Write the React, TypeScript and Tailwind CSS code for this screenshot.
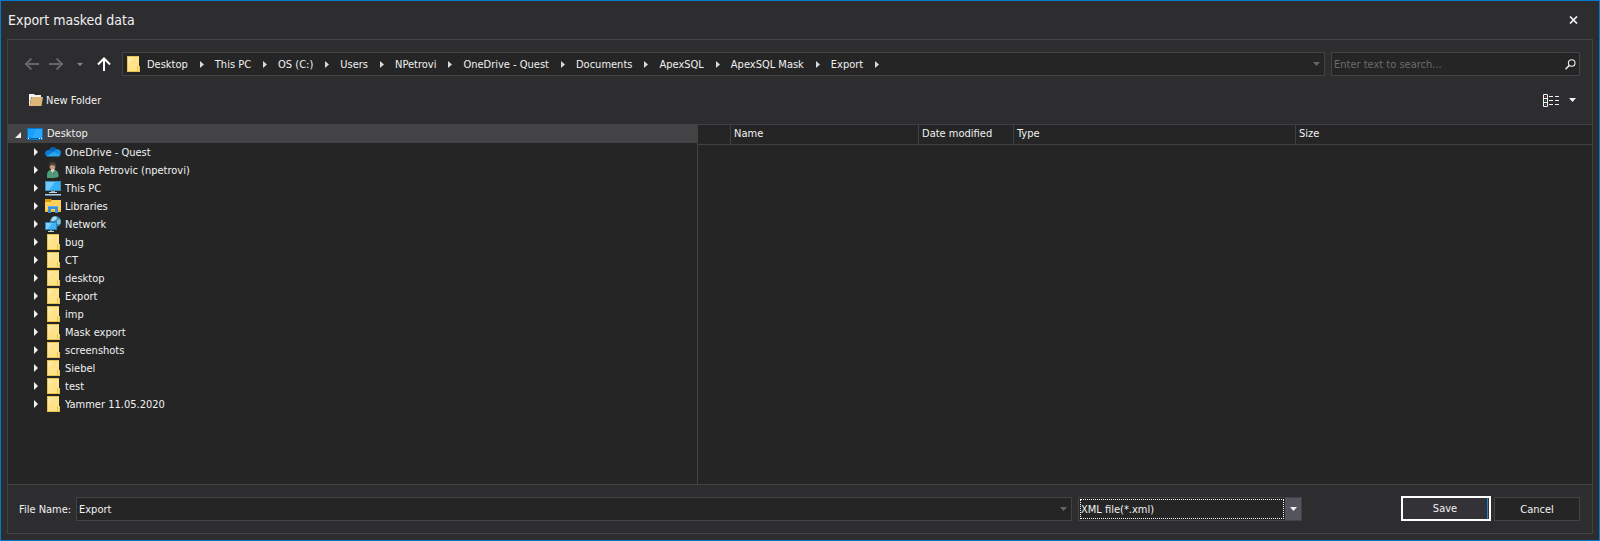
import type { ReactNode } from "react";

function FolderIcon() {
  return (
    <svg width="16" height="16" viewBox="0 0 16 16" aria-hidden="true" className="shrink-0">
      <rect x="2" y="0" width="12" height="16" fill="#e8c34f" />
      <rect x="3" y="1" width="11" height="14" fill="#ffe38b" />
      <path d="M3 1h6L3 9z" fill="#ffeaa4" />
      <path d="M12 10h3v6h-3z" fill="#e8c34f" />
      <path d="M13 10h1v5h-1z" fill="#ffe08a" />
    </svg>
  );
}

function NewFolderIcon() {
  return (
    <svg width="14" height="12" viewBox="0 0 14 12" aria-hidden="true" className="shrink-0">
      <path d="M0 0h5l1 1h6v2H2L0 12z" fill="#f5f3f0" />
      <path d="M2.5 3H14l-1.5 9H0.5z" fill="#dcb67a" />
      <path d="M0 3h2L0.5 12H0z" fill="#f5f3f0" />
    </svg>
  );
}

function DesktopIcon() {
  return (
    <svg width="16" height="12" viewBox="0 0 16 12" aria-hidden="true" className="shrink-0">
      <rect width="16" height="12" fill="#0a78c8" />
      <rect x="1" y="1" width="14" height="9" fill="#18a0fb" />
      <path d="M9 1h6v9H5z" fill="#35adff" opacity="0.7" />
      <rect x="1" y="10" width="14" height="1" fill="#0b5f9f" />
      <path d="M1 10h1v1H1zM12 10h1v1h-1zM14 10h1v1h-1z" fill="#ffffff" />
    </svg>
  );
}

function OneDriveIcon() {
  return (
    <svg width="16" height="16" viewBox="0 0 16 16" aria-hidden="true" className="shrink-0">
      <path d="M4 7.2A4.3 4.3 0 0 1 12 5.400L9.5 9 4 8z" fill="#0364b8" />
      <path d="M0 9.600A3.500 3.500 0 0 1 3.600 6c1.300 0 2 .3 2.800.8l4.600 2.800L2 12.300A3 3 0 0 1 0 9.600z" fill="#0f78d4" />
      <path d="M8.500 8c1-1.800 2.200-2.700 3.700-2.700A3.800 3.800 0 0 1 16 9.200l-1.500 2.300z" fill="#1490df" />
      <path d="M1.400 12 8.800 7.800 15.500 11c-.6.900-1.300 1.500-2.300 1.500H3.500c-.900 0-1.600-.1-2.100-.5z" fill="#28a8ea" />
    </svg>
  );
}

function UserIcon() {
  return (
    <svg width="16" height="16" viewBox="0 0 16 16" aria-hidden="true" className="shrink-0">
      <path d="M2 16V13c0-3 1.500-5 4-5h3c3 0 4.500 2 4.500 5v2c-2 1-9 1-11.500 1z" fill="#4f9a78" />
      <path d="M6 7h3.500v2L8.500 12 6 9z" fill="#e7d5c4" />
      <circle cx="7.500" cy="4.500" r="3" fill="#c99b7a" />
      <path d="M4 4.500C3.500 1.500 5 0 7.500 0s4 1.500 3.300 4.700L10 6 9.500 3.500 6 3 5 5z" fill="#4a413c" />
      <path d="M8.500 9 8 13l2-3z" fill="#2f6f54" />
    </svg>
  );
}

function ComputerIcon() {
  return (
    <svg width="16" height="16" viewBox="0 0 16 16" aria-hidden="true" className="shrink-0">
      <rect x="0" y="1" width="16" height="10" fill="#3f8fb8" />
      <rect x="1" y="2" width="14" height="8" fill="#36b0f8" />
      <path d="M1 2h9L4 10H1z" fill="#6fcbff" />
      <rect x="6" y="11" width="4" height="1" fill="#8ba3b3" />
      <rect x="4" y="12" width="8" height="1" fill="#c8d3da" />
      <rect x="0" y="14" width="16" height="1" fill="#b8cbd8" />
      <rect x="0" y="15" width="16" height="1" fill="#54809e" />
    </svg>
  );
}

function LibrariesIcon() {
  return (
    <svg width="16" height="16" viewBox="0 0 16 16" aria-hidden="true" className="shrink-0">
      <path d="M0 1h6l2 2h-2L5 4H0z" fill="#e09b00" />
      <path d="M0 4h5l2-2h9v12H0z" fill="#ffd158" />
      <path d="M0 12h16v2H0z" fill="#f3bd3c" />
      <path d="M3 8h10v7h-3v-4H6v4H3z" fill="#3a92dc" />
      <path d="M3 8h10v1H3z" fill="#5fb2f0" />
    </svg>
  );
}

function NetworkIcon() {
  return (
    <svg width="16" height="16" viewBox="0 0 16 16" aria-hidden="true" className="shrink-0">
      <circle cx="10.500" cy="5.500" r="5.500" fill="#3c86ad" />
      <path d="M7 2c1-1.300 3-1.700 4.500-1.200L12 3 9 5H6z" fill="#a9dcf0" />
      <path d="M12 4l3-1c.8 1.500.8 4 0 5.500L12 8z" fill="#7fc0dc" />
      <rect x="0" y="6" width="12" height="8" fill="#2f86bd" />
      <rect x="1" y="7" width="10" height="6" fill="#3fb4fa" />
      <path d="M1 7h6l-4 6H1z" fill="#78cfff" />
      <rect x="5" y="14" width="2" height="1" fill="#8ba3b3" />
      <rect x="3" y="15" width="6" height="1" fill="#c2ccd3" />
    </svg>
  );
}

function Chevron({ className = "text-[#f1f1f1]" }: { className?: string }) {
  return (
    <svg width="7" height="4" viewBox="0 0 7 4" aria-hidden="true" className={`shrink-0 ${className}`}>
      <path d="M0 0h7L3.500 4z" fill="currentColor" />
    </svg>
  );
}

function Arrow({ className }: { className: string }) {
  return (
    <svg width="14" height="12" viewBox="0 0 14 12" aria-hidden="true" className={`shrink-0 ${className}`}>
      <path d="M1 6h13M6.500.500 1 6l5.500 5.500" fill="none" stroke="currentColor" strokeWidth="2" />
    </svg>
  );
}

const crumbs = [
  "Desktop", "This PC", "OS (C:)", "Users", "NPetrovi", "OneDrive - Quest",
  "Documents", "ApexSQL", "ApexSQL Mask", "Export",
];

const nodes: { label: string; icon: ReactNode }[] = [
  { label: "OneDrive - Quest", icon: <OneDriveIcon /> },
  { label: "Nikola Petrovic (npetrovi)", icon: <UserIcon /> },
  { label: "This PC", icon: <ComputerIcon /> },
  { label: "Libraries", icon: <LibrariesIcon /> },
  { label: "Network", icon: <NetworkIcon /> },
  ...["bug", "CT", "desktop", "Export", "imp", "Mask export", "screenshots", "Siebel", "test", "Yammer 11.05.2020"].map(
    (label) => ({ label, icon: <FolderIcon /> }),
  ),
];

function TitleBar() {
  return (
    <header className="flex h-[38px] items-center justify-between pl-[7px] pr-5">
      <h1 className="text-sm">Export masked data</h1>
      <button type="button" aria-label="Close" className="flex h-6 w-[11px] items-center justify-center">
        <svg width="9" height="8" viewBox="0 0 9 8" aria-hidden="true">
          <path d="M1 0.500 8 7.500M8 0.500 1 7.500" stroke="#f1f1f1" strokeWidth="1.700" />
        </svg>
      </button>
    </header>
  );
}

function NavigationRow() {
  return (
    <div className="flex items-center gap-1.5 px-3 pt-3">
      <nav aria-label="History" className="flex w-24 shrink-0 items-center pl-[5px]">
        <button type="button" aria-label="Back"><Arrow className="text-[#66666a]" /></button>
        <button type="button" aria-label="Forward" className="ml-2.5"><Arrow className="rotate-180 text-[#66666a]" /></button>
        <button type="button" aria-label="Recent locations" className="ml-3.5">
          <svg width="6" height="3" viewBox="0 0 6 3" aria-hidden="true"><path d="M0 0h6L3 3z" fill="#8a8a8d" /></svg>
        </button>
        <button type="button" aria-label="Up one level" className="ml-3.5">
          <svg width="14" height="14" viewBox="0 0 14 14" aria-hidden="true">
            <path d="M7 14V1.500M1 7.500l6-6 6 6" fill="none" stroke="#ffffff" strokeWidth="2" />
          </svg>
        </button>
      </nav>
      <div className="flex h-6 min-w-0 flex-1 items-center border border-[#434346] bg-[#252526] pl-0.5 pr-1">
        <FolderIcon />
        <ol className="flex min-w-0 flex-1 items-center overflow-hidden pl-1.5">
          {crumbs.map((crumb) => (
            <li key={crumb} className="flex items-center whitespace-nowrap">
              <a href="#">{crumb}</a>
              <svg width="4" height="7" viewBox="0 0 4 7" aria-hidden="true" className="ml-3 mr-[11px] shrink-0">
                <path d="M0 0 4 3.500 0 7z" fill="#d8d8d8" />
              </svg>
            </li>
          ))}
        </ol>
        <button type="button" aria-label="Previous locations"><Chevron className="text-[#66666a]" /></button>
      </div>
      <div className="flex h-6 w-[249px] shrink-0 items-center border border-[#434346] bg-[#252526] pl-0.5 pr-[3px]">
        <input
          type="search"
          aria-label="Search"
          placeholder="Enter text to search..."
          className="min-w-0 flex-1 bg-transparent outline-none placeholder:text-[#6b6b6e]"
        />
        <button type="button" aria-label="Search">
          <svg width="11" height="11" viewBox="0 0 11 11" aria-hidden="true">
            <circle cx="6.700" cy="4" r="3.300" fill="none" stroke="#f1f1f1" strokeWidth="1.100" />
            <path d="M4.200 6.500.500 10.300" stroke="#f1f1f1" strokeWidth="1.500" />
          </svg>
        </button>
      </div>
    </div>
  );
}

function Toolbar() {
  return (
    <div className="flex h-12 items-center justify-between pl-[21px] pr-4">
      <button type="button" className="flex items-center gap-[3px]">
        <NewFolderIcon />
        New Folder
      </button>
      <button type="button" aria-label="Change view" className="flex items-center gap-2.5">
        <svg width="16" height="13" viewBox="0 0 16 13" aria-hidden="true">
          <path d="M.5.5h4v12h-4zM.5 4.500h4M.5 8.500h4M6 2.500h4M12 2.500h4M6 6.500h4M12 6.500h4M6 10.500h4M12 10.500h4" fill="none" stroke="#f1f1f1" />
          <path d="M2 2h1v1H2z" fill="#e0506a" />
          <path d="M2 6h1v1H2z" fill="#3fae63" />
          <path d="M2 10h1v1H2z" fill="#3c8fd8" />
        </svg>
        <Chevron />
      </button>
    </div>
  );
}

function FolderTree() {
  return (
    <div role="tree" aria-label="Folders" className="w-[43.5%] shrink-0 bg-[#252526]">
      <div role="treeitem" aria-expanded="true" aria-selected="true" className="flex h-[19px] items-center bg-[#434346] pl-[7px]">
        <svg width="6" height="6" viewBox="0 0 6 6" aria-hidden="true" className="mt-0.5">
          <path d="M6 0v6H0z" fill="#f1f1f1" />
        </svg>
        <span className="ml-1.5"><DesktopIcon /></span>
        <span className="ml-1">Desktop</span>
      </div>
      {nodes.map((node) => (
        <div role="treeitem" aria-expanded="false" key={node.label} className="flex h-[18px] items-center pl-[26px]">
          <svg width="4" height="8" viewBox="0 0 4 8" aria-hidden="true" className="shrink-0">
            <path d="M0 0 4 4 0 8z" fill="#f1f1f1" />
          </svg>
          <span className="ml-[7px]">{node.icon}</span>
          <span className="ml-1 whitespace-nowrap">{node.label}</span>
        </div>
      ))}
    </div>
  );
}

function FileList() {
  return (
    <div className="min-w-0 flex-1 border-l border-[#434346] bg-[#252526]">
      <table className="w-full table-fixed border-separate border-spacing-0">
        <colgroup>
          <col className="w-8" />
          <col className="w-[188px]" />
          <col className="w-[95px]" />
          <col className="w-[282px]" />
          <col />
        </colgroup>
        <thead>
          <tr className="h-[21px] text-left">
            <td className="border-y border-[#3f3f46]" />
            {["Name", "Date modified", "Type", "Size"].map((heading) => (
              <th key={heading} scope="col" className="whitespace-nowrap border-y border-l border-[#3f3f46] pb-0.5 pl-[3px] pt-0 font-normal">
                {heading}
              </th>
            ))}
          </tr>
        </thead>
      </table>
    </div>
  );
}

function Footer() {
  return (
    <div className="flex items-center border-t border-[#434346] py-3 pl-[11px] pr-3">
      <label htmlFor="file-name" className="w-[57px] shrink-0 whitespace-nowrap">File Name:</label>
      <div className="flex h-6 min-w-0 flex-1 items-center border border-[#434346] bg-[#252526] pl-0.5 pr-1">
        <input id="file-name" type="text" defaultValue="Export" className="min-w-0 flex-1 bg-transparent outline-none" />
        <button type="button" aria-label="Recent file names"><Chevron className="text-[#66666a]" /></button>
      </div>
      <div className="ml-1.5 flex h-6 w-56 shrink-0 border border-[#434346] bg-[#252526]">
        <select
          aria-label="File type"
          className="m-px min-w-0 flex-1 appearance-none border border-dotted border-white bg-transparent outline-none"
        >
          <option>XML file(*.xml)</option>
        </select>
        <span className="flex w-4 items-center justify-center bg-[#54545c]"><Chevron /></span>
      </div>
      <div className="ml-[99px] flex shrink-0 items-center gap-[3px]">
        <button type="button" className="-mt-px flex h-[25px] w-[90px] border-2 border-white bg-[#333337] pr-px">
          <span className="flex h-full flex-1 items-center justify-center border-r border-[#1c87d0]">Save</span>
        </button>
        <button type="button" className="h-6 w-[86px] border border-[#434346] bg-[#252526]">Cancel</button>
      </div>
    </div>
  );
}

export default function App() {
  return (
    <main className="flex min-h-screen flex-col border border-[#007acc] bg-[#2d2d30] px-1.5 pb-1.5 font-['DejaVu_Sans_Condensed','Noto_Sans',sans-serif] text-[11px] leading-[17px] text-[#f1f1f1]">
      <div className="-mx-1.5"><TitleBar /></div>
      <div className="flex flex-1 flex-col border border-[#434346]">
        <NavigationRow />
        <Toolbar />
        <div className="flex flex-1">
          <FolderTree />
          <FileList />
        </div>
        <Footer />
      </div>
    </main>
  );
}
